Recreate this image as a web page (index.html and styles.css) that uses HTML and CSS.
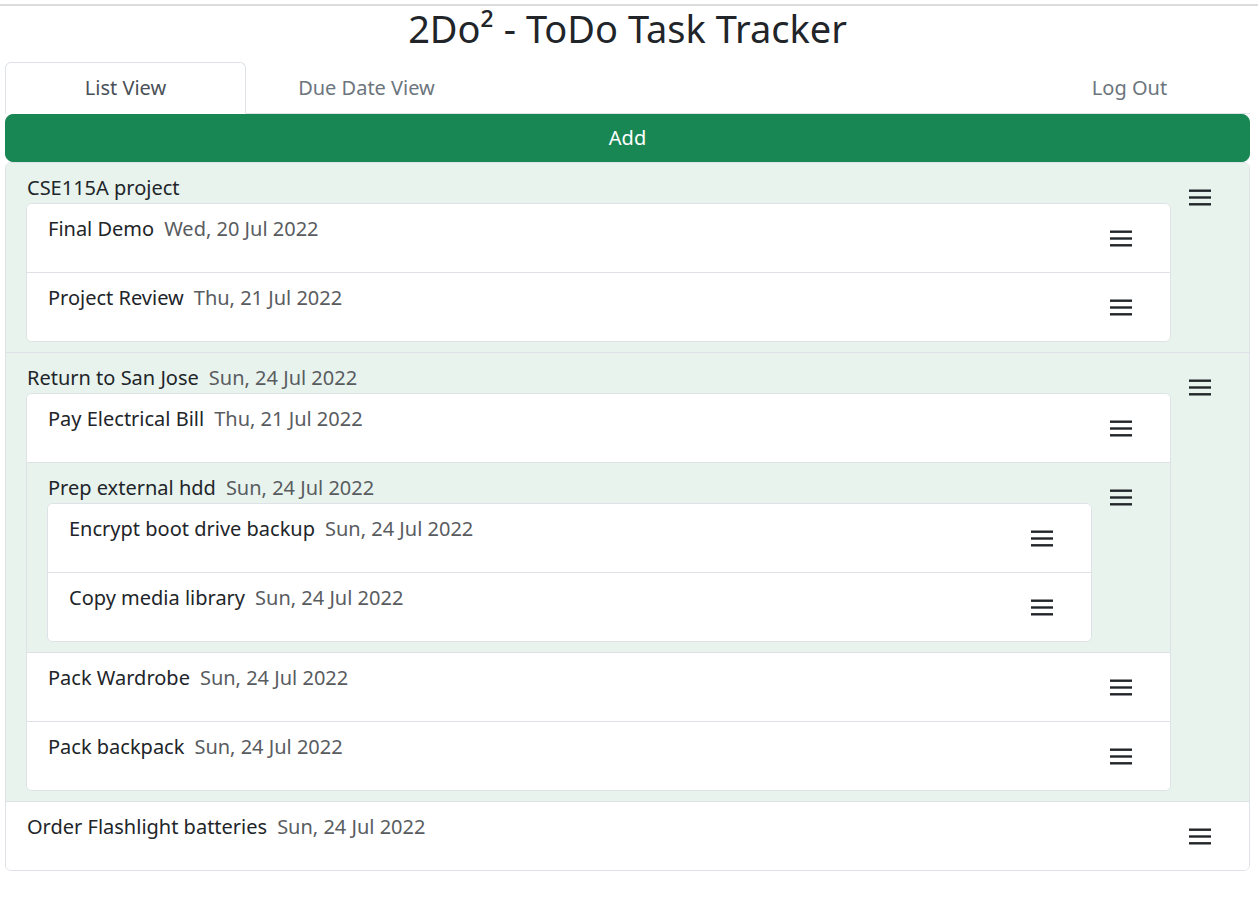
FILE: index.html
```html
<!DOCTYPE html>
<html lang="en">
<head>
<meta charset="utf-8">
<title>2Do2 - ToDo Task Tracker</title>
<link rel="stylesheet" href="styles.css">
</head>
<body>
<div class="topline"></div>
<div class="app">
  <h1 class="title">2Do² - ToDo Task Tracker</h1>
  <nav class="tabs">
    <a class="tab active">List View</a>
    <a class="tab">Due Date View</a>
    <a class="tab logout">Log Out</a>
  </nav>
  <button class="add">Add</button>

  <div class="list">
    <div class="item group">
      <div class="body">
        <div class="label"><span class="name">CSE115A project</span></div>
        <div class="list">
          <div class="item">
            <div class="body"><div class="label"><span class="name">Final Demo</span><span class="date">Wed, 20 Jul 2022</span></div></div>
            <button class="menu"><svg viewBox="0 0 22 17" width="22" height="17"><rect x="0" y="0.5" width="22" height="2.4"/><rect x="0" y="7.3" width="22" height="2.4"/><rect x="0" y="14.1" width="22" height="2.4"/></svg></button>
          </div>
          <div class="item">
            <div class="body"><div class="label"><span class="name">Project Review</span><span class="date">Thu, 21 Jul 2022</span></div></div>
            <button class="menu"><svg viewBox="0 0 22 17" width="22" height="17"><rect x="0" y="0.5" width="22" height="2.4"/><rect x="0" y="7.3" width="22" height="2.4"/><rect x="0" y="14.1" width="22" height="2.4"/></svg></button>
          </div>
        </div>
      </div>
      <button class="menu"><svg viewBox="0 0 22 17" width="22" height="17"><rect x="0" y="0.5" width="22" height="2.4"/><rect x="0" y="7.3" width="22" height="2.4"/><rect x="0" y="14.1" width="22" height="2.4"/></svg></button>
    </div>

    <div class="item group">
      <div class="body">
        <div class="label"><span class="name">Return to San Jose</span><span class="date">Sun, 24 Jul 2022</span></div>
        <div class="list">
          <div class="item">
            <div class="body"><div class="label"><span class="name">Pay Electrical Bill</span><span class="date">Thu, 21 Jul 2022</span></div></div>
            <button class="menu"><svg viewBox="0 0 22 17" width="22" height="17"><rect x="0" y="0.5" width="22" height="2.4"/><rect x="0" y="7.3" width="22" height="2.4"/><rect x="0" y="14.1" width="22" height="2.4"/></svg></button>
          </div>
          <div class="item group">
            <div class="body">
              <div class="label"><span class="name">Prep external hdd</span><span class="date">Sun, 24 Jul 2022</span></div>
              <div class="list">
                <div class="item">
                  <div class="body"><div class="label"><span class="name">Encrypt boot drive backup</span><span class="date">Sun, 24 Jul 2022</span></div></div>
                  <button class="menu"><svg viewBox="0 0 22 17" width="22" height="17"><rect x="0" y="0.5" width="22" height="2.4"/><rect x="0" y="7.3" width="22" height="2.4"/><rect x="0" y="14.1" width="22" height="2.4"/></svg></button>
                </div>
                <div class="item">
                  <div class="body"><div class="label"><span class="name">Copy media library</span><span class="date">Sun, 24 Jul 2022</span></div></div>
                  <button class="menu"><svg viewBox="0 0 22 17" width="22" height="17"><rect x="0" y="0.5" width="22" height="2.4"/><rect x="0" y="7.3" width="22" height="2.4"/><rect x="0" y="14.1" width="22" height="2.4"/></svg></button>
                </div>
              </div>
            </div>
            <button class="menu"><svg viewBox="0 0 22 17" width="22" height="17"><rect x="0" y="0.5" width="22" height="2.4"/><rect x="0" y="7.3" width="22" height="2.4"/><rect x="0" y="14.1" width="22" height="2.4"/></svg></button>
          </div>
          <div class="item">
            <div class="body"><div class="label"><span class="name">Pack Wardrobe</span><span class="date">Sun, 24 Jul 2022</span></div></div>
            <button class="menu"><svg viewBox="0 0 22 17" width="22" height="17"><rect x="0" y="0.5" width="22" height="2.4"/><rect x="0" y="7.3" width="22" height="2.4"/><rect x="0" y="14.1" width="22" height="2.4"/></svg></button>
          </div>
          <div class="item">
            <div class="body"><div class="label"><span class="name">Pack backpack</span><span class="date">Sun, 24 Jul 2022</span></div></div>
            <button class="menu"><svg viewBox="0 0 22 17" width="22" height="17"><rect x="0" y="0.5" width="22" height="2.4"/><rect x="0" y="7.3" width="22" height="2.4"/><rect x="0" y="14.1" width="22" height="2.4"/></svg></button>
          </div>
        </div>
      </div>
      <button class="menu"><svg viewBox="0 0 22 17" width="22" height="17"><rect x="0" y="0.5" width="22" height="2.4"/><rect x="0" y="7.3" width="22" height="2.4"/><rect x="0" y="14.1" width="22" height="2.4"/></svg></button>
    </div>

    <div class="item">
      <div class="body"><div class="label"><span class="name">Order Flashlight batteries</span><span class="date">Sun, 24 Jul 2022</span></div></div>
      <button class="menu"><svg viewBox="0 0 22 17" width="22" height="17"><rect x="0" y="0.5" width="22" height="2.4"/><rect x="0" y="7.3" width="22" height="2.4"/><rect x="0" y="14.1" width="22" height="2.4"/></svg></button>
    </div>
  </div>
</div>
</body>
</html>
```

FILE: styles.css
```css
* { box-sizing: border-box; }

body {
  margin: 0;
  font-family: "Noto Sans", "Open Sans", sans-serif;
  color: #212529;
  background: #fff;
}

.topline {
  height: 2px;
  margin-top: 4px;
  background: #dcdcdc;
}

.app {
  padding: 0 8px 0 5px;
}

.title {
  margin: 0 0 14px;
  padding-top: 3px;
  font-size: 38px;
  font-weight: 400;
  line-height: 39px;
  text-align: center;
  color: #212529;
}

.tabs {
  display: flex;
  border-bottom: 1px solid #dee2e6;
}

.tab {
  width: 241px;
  padding: 10px 0;
  margin-bottom: -1px;
  font-size: 20px;
  line-height: 30px;
  text-align: center;
  color: #6c757d;
  border: 1px solid transparent;
  border-radius: 6px 6px 0 0;
}

.tab.active {
  color: #495057;
  background: #fff;
  border-color: #dee2e6 #dee2e6 #fff;
}

.tab.logout {
  margin-left: auto;
}

.add {
  display: block;
  width: 100%;
  height: 48px;
  padding: 8px;
  font-family: inherit;
  font-size: 20px;
  line-height: 30px;
  color: #fff;
  background: #198754;
  border: 1px solid #198754;
  border-radius: 8px;
}

.list {
  border: 1px solid #dee2e6;
  border-radius: 6px;
  overflow: hidden;
  background: #fff;
}

.item {
  display: flex;
  align-items: flex-start;
  gap: 5px;
  padding: 10px 25px 10px 20px;
  background: #fff;
}

.item + .item {
  border-top: 1px solid #dee2e6;
}

.item.group {
  background: #e8f3ee;
}

.body {
  flex: 1;
  min-width: 0;
}

.label {
  display: flex;
  gap: 10px;
  padding-left: 1px;
  font-size: 20px;
  line-height: 30px;
}

.name {
  color: #212529;
}

.date {
  color: #595c5f;
}

.menu {
  flex: none;
  width: 48px;
  height: 48px;
  padding: 0;
  display: flex;
  align-items: center;
  justify-content: center;
  background: transparent;
  border: 0;
  fill: #212529;
}

.menu svg {
  display: block;
}
```
